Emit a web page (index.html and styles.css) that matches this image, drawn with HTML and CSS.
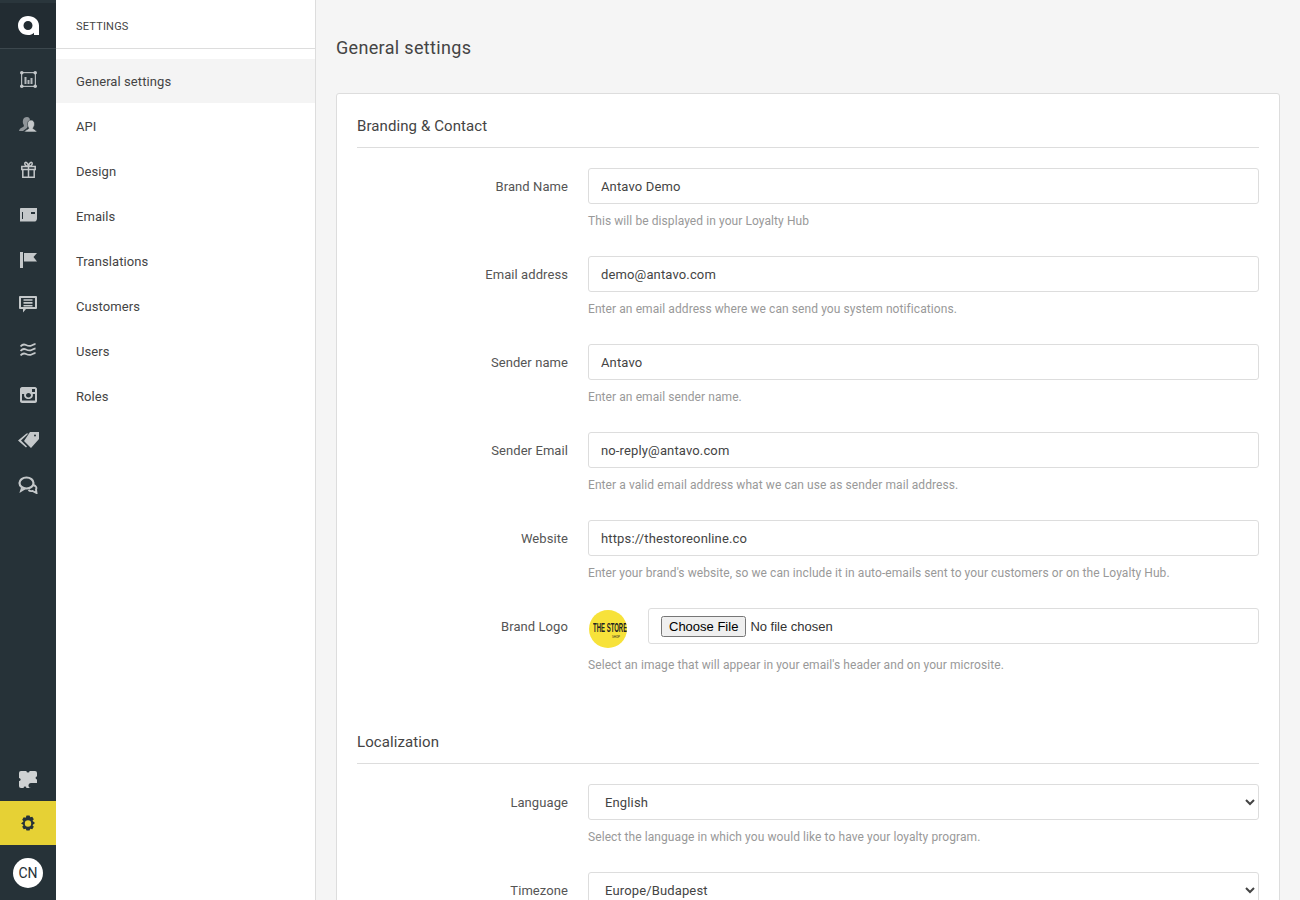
FILE: index.html
```html
<!DOCTYPE html>
<html lang="en">
<head>
<meta charset="utf-8">
<title>General settings</title>
<link rel="stylesheet" href="styles.css">
</head>
<body>
<div class="app">
  <nav class="rail">
    <div class="rail-logo">
      <svg width="21" height="19" viewBox="0 0 21 19"><path fill="#fff" fill-rule="evenodd" d="M10 0C4 0 0 4.200 0 9.500S4 19 10 19c2.500 0 4.500-.9 6-2.300V19h5V9.500C21 4 16 0 10 0zm0 5a4.500 4.500 0 110 9 4.500 4.500 0 010-9z"/></svg>
    </div>
    <div class="rail-top">
      <a class="rail-item"><svg width="17" height="17" viewBox="0 0 17 17" fill="none" stroke="#b4b9bc" stroke-width="1.200"><rect x="1.600" y="1.600" width="13.800" height="13.800"/><g fill="#c4c8ca" stroke="none"><circle cx="1.800" cy="1.800" r="1.800"/><circle cx="15.200" cy="1.800" r="1.800"/><circle cx="1.800" cy="15.200" r="1.800"/><circle cx="15.200" cy="15.200" r="1.800"/></g><path fill="#b4b9bc" stroke="none" d="M4.500 6h2v7h-2zM7.500 9h2v4h-2zM10.500 7h2v6h-2z"/></svg></a>
      <a class="rail-item"><svg width="20" height="18" viewBox="0 0 20 18" fill="#c4c8ca"><path fill="#8f9599" d="M9 1c2 0 3 1.500 3 3.500S11 9 10 10l-1 2-4 3H1c.2-2 2-3.200 4-4 .8-.4 1-1 .8-2C5 8 4.500 6 5 4c.4-2 2-3 4-3z"/><path stroke="#263238" stroke-width=".6" d="M13 4c2.200 0 3.500 1.700 3.500 4S15.400 11.200 15 12.300c.2 1 2.800 1.200 4 3.700H6.500c1-2.500 4-2.700 4.300-3.700C10.200 11.200 9.500 10 9.500 8c0-2.300 1.300-4 3.500-4z"/></svg></a>
      <a class="rail-item"><svg width="15" height="17" viewBox="0 0 15 17" fill="none" stroke="#c4c8ca" stroke-width="1.500"><path d="M.8 5.500h13.400v3H.8zM1.800 8.500v7.700h11.400V8.500M7.500 5.500v10.700M7.500 5.500C5.500 5.500 3.500 4.200 3.800 2.200 4.200.3 7 1.500 7.500 5.500c.5-4 3.300-5.200 3.700-3.300.3 2-1.700 3.300-3.700 3.300z"/></svg></a>
      <a class="rail-item"><svg width="17" height="14" viewBox="0 0 17 14" fill="#c4c8ca"><path fill-rule="evenodd" d="M1 0h16v10.500c0 1.500-1 3-2 3H0V1c0-.5.500-1 1-1zM11 4v2h4V4zM2 4v7h1V4z"/></svg></a>
      <a class="rail-item"><svg width="17" height="16" viewBox="0 0 17 16" fill="#c4c8ca"><path d="M0 0h3v16H0zM4 1h13l-3.500 4 3.500 4.500H4z"/></svg></a>
      <a class="rail-item"><svg width="18" height="17" viewBox="0 0 18 17" fill="#c4c8ca"><path fill-rule="evenodd" d="M1 0h16c.5 0 1 .5 1 1v11c0 .5-.5 1-1 1H7l-3 3.500V13H1c-.5 0-1-.5-1-1V1c0-.5.500-1 1-1zm3.500 3.200v1.600h9V3.200zm0 2.900v1.600h9V6.100zm0 2.900v1.600h9V9zM2 2v9h14V2z"/></svg></a>
      <a class="rail-item"><svg width="16" height="14" viewBox="0 0 16 14" fill="none" stroke="#c4c8ca" stroke-width="1.800"><path d="M.5 3.500C2.500 1 4 1 6 2s3.500 1.500 5.500.5S14.500 1 15.500 1M.5 8C2.500 5.500 4 5.500 6 6.500s3.500 1.500 5.500.5 3-1.500 4-1.500M.5 12.500C2.500 10 4 10 6 11s3.500 1.500 5.500.5 3-1.500 4-1.500"/></svg></a>
      <a class="rail-item"><svg width="17" height="16" viewBox="0 0 17 16" fill="#c4c8ca"><path fill-rule="evenodd" d="M2 0h13c1 0 2 1 2 2v12c0 1-1 2-2 2H2c-1 0-2-1-2-2V2C0 1 1 0 2 0zm10 2v3h3V2zM2 7v6.500h13V7h-2.200c.7 3-1.600 5-4.300 5S3.500 10 4.200 7zm6.500-1C7 6 6 7 6 8.300s1 2.200 2.500 2.200S11 9.500 11 8.300 10 6 8.500 6z"/></svg></a>
      <a class="rail-item"><svg width="21" height="16" viewBox="0 0 21 16" fill="#c4c8ca"><path fill-rule="evenodd" d="M12 0h9v7l-8 9-7-7zm5 2.500a1 1 0 100 2 1 1 0 000-2z"/><path d="M8.500 1.500h2L3 8.500l6 6-1 1L0 8.500z"/></svg></a>
      <a class="rail-item"><svg width="20" height="18" viewBox="0 0 20 18" fill="none" stroke="#c4c8ca" stroke-width="2.200"><ellipse cx="8.500" cy="7" rx="7" ry="5.500"/><path stroke-width="1.900" d="M4 11.500 3 15l4-2.500M15.500 9c2.500 1 3.500 2.500 2.500 4.500l.5 3.500-4-2c-1.500.3-3 0-4-1"/></svg></a>
    </div>
    <div class="rail-bottom">
      <a class="rail-item rail-puzzle"><svg width="18" height="17" viewBox="0 0 18 17"><rect width="18" height="17" rx="2" fill="#cfd2d3"/><g fill="#263238"><circle cx="9" cy="0" r="1.600"/><circle cx="0" cy="8.500" r="1.600"/><circle cx="18" cy="7" r="1.400"/><circle cx="6" cy="17" r="1.400"/><rect x="12" y="12" width="6" height="5"/><circle cx="12" cy="14.500" r="2.500"/></g></svg></a>
      <a class="rail-active"><svg width="16" height="17" viewBox="0 0 16 17"><path fill="#263238" fill-rule="evenodd" d="M6.500.5h3l.8 1.800 2-.5 1.500 2.500-1.300 1.500 1 1 1.500 1.200-1.500 1.200-1 1 1.300 1.500-1.500 2.500-2-.5-.8 1.800h-3l-.8-1.800-2 .5-1.500-2.500 1.300-1.500-1-1L1 8.500 2.500 7.300l1-1-1.300-1.500 1.500-2.500 2 .5zM8 5.300a3.200 3.200 0 100 6.400 3.200 3.200 0 000-6.400z"/></svg></a>
      <div class="rail-user"><span class="avatar">CN</span></div>
    </div>
  </nav>

  <aside class="side">
    <div class="side-head">SETTINGS</div>
    <ul class="side-list">
      <li class="side-item is-active">General settings</li>
      <li class="side-item">API</li>
      <li class="side-item">Design</li>
      <li class="side-item">Emails</li>
      <li class="side-item">Translations</li>
      <li class="side-item">Customers</li>
      <li class="side-item">Users</li>
      <li class="side-item">Roles</li>
    </ul>
  </aside>

  <main class="main">
    <h1 class="page-title">General settings</h1>
    <section class="card">
      <h2 class="card-title">Branding &amp; Contact</h2>
      <div class="row">
        <label class="row-label">Brand Name</label>
        <div class="row-body"><input class="field" type="text" value="Antavo Demo"><p class="help">This will be displayed in your Loyalty Hub</p></div>
      </div>
      <div class="row">
        <label class="row-label">Email address</label>
        <div class="row-body"><input class="field" type="text" value="demo@antavo.com"><p class="help">Enter an email address where we can send you system notifications.</p></div>
      </div>
      <div class="row">
        <label class="row-label">Sender name</label>
        <div class="row-body"><input class="field" type="text" value="Antavo"><p class="help">Enter an email sender name.</p></div>
      </div>
      <div class="row">
        <label class="row-label">Sender Email</label>
        <div class="row-body"><input class="field" type="text" value="no-reply@antavo.com"><p class="help">Enter a valid email address what we can use as sender mail address.</p></div>
      </div>
      <div class="row">
        <label class="row-label">Website</label>
        <div class="row-body"><input class="field" type="text" value="https://thestoreonline.co"><p class="help">Enter your brand's website, so we can include it in auto-emails sent to your customers or on the Loyalty Hub.</p></div>
      </div>
      <div class="row">
        <label class="row-label">Brand Logo</label>
        <div class="row-body">
          <div class="logo-line">
            <span class="brand-logo"><span class="brand-text">THE STORE</span><span class="brand-sub">SHOP</span></span>
            <div class="file-box"><input class="file" type="file"></div>
          </div>
          <p class="help help-logo">Select an image that will appear in your email's header and on your microsite.</p>
        </div>
      </div>

      <h2 class="card-title card-title-next">Localization</h2>
      <div class="row">
        <label class="row-label">Language</label>
        <div class="row-body"><select class="field"><option>English</option></select><p class="help">Select the language in which you would like to have your loyalty program.</p></div>
      </div>
      <div class="row">
        <label class="row-label">Timezone</label>
        <div class="row-body"><select class="field"><option>Europe/Budapest</option></select></div>
      </div>
    </section>
  </main>
</div>
</body>
</html>
```
FILE: styles.css
```css
* { box-sizing: border-box; }
html, body { margin: 0; height: 100%; overflow: hidden; }
body { font-family: Roboto, "Liberation Sans", sans-serif; font-size: 13px; color: #333; letter-spacing: .08px; }
.app { display: flex; height: 900px; overflow: hidden; }

.rail { width: 56px; flex: none; background: #263238; display: flex; flex-direction: column; }
.rail-logo { height: 49px; flex: none; display: flex; align-items: center; justify-content: center; border-top: 3px solid #2a363c; border-bottom: 1px solid #3c474d; background: #222c32; }
.rail-top { padding-top: 8px; display: flex; flex-direction: column; }
.rail-item { height: 45px; display: flex; align-items: center; justify-content: center; }
.rail-bottom { margin-top: auto; display: flex; flex-direction: column; }
.rail-puzzle { height: 44px; }
.rail-active { height: 44px; background: #e6d135; display: flex; align-items: center; justify-content: center; }
.rail-user { height: 55px; display: flex; align-items: center; justify-content: center; }
.avatar { width: 30px; height: 30px; border-radius: 50%; background: #fff; color: #263238; font-size: 14px; letter-spacing: 0; display: flex; align-items: center; justify-content: center; }

.side { width: 260px; flex: none; background: #fff; border-right: 1px solid #ddd; }
.side-head { height: 49px; border-bottom: 1px solid #ddd; padding: 4px 20px 0; display: flex; align-items: center; font-size: 11px; color: #444; letter-spacing: .2px; }
.side-list { list-style: none; margin: 10px 0 0; padding: 0; }
.side-item { height: 45px; padding: 0 20px; display: flex; align-items: center; color: #444; }
.side-item.is-active { height: 44px; margin-bottom: 1px; background: #f4f4f4; }

.main { flex: 1; min-width: 0; background: #f5f5f5; padding: 0 20px; }
.page-title { margin: 0; height: 93px; padding-top: 37px; font-size: 18px; line-height: 22px; font-weight: 400; color: #444; letter-spacing: .33px; }
.card { background: #fff; border: 1px solid #ddd; border-radius: 3px; padding: 20px 20px 0; }
.card-title { margin: 0 0 20px; height: 34px; border-bottom: 1px solid #ddd; font-size: 15px; line-height: 24px; font-weight: 400; color: #444; letter-spacing: .09px; }
.card-title-next { margin-top: 34px; }
.row { display: flex; height: 88px; }
.row-label { width: 211px; flex: none; padding-top: 11px; line-height: 16px; text-align: right; color: #555; }
.row-body { margin-left: 20px; flex: 1; min-width: 0; }
.field { display: block; width: 100%; height: 36px; border: 1px solid #ddd; border-radius: 3px; background: #fff; padding: 0 12px; font: inherit; letter-spacing: .14px; color: #444; }
.help { margin: 9px 0 0; font-size: 12px; line-height: 16px; color: #999; }
.help-logo { margin-top: 13px; }
.logo-line { display: flex; align-items: flex-start; height: 36px; }
.brand-logo { width: 38px; height: 38px; flex: none; margin: 2px 21px 0 1px; border-radius: 50%; background: #f7e23a; display: flex; flex-direction: column; align-items: center; justify-content: center; overflow: hidden; color: #222; }
.brand-text { font-family: "Liberation Sans", sans-serif; font-size: 13px; line-height: 15px; font-weight: 700; letter-spacing: 0; white-space: nowrap; transform: scaleX(.46); margin-left: 5px; }
.brand-sub { font-size: 3px; line-height: 4px; letter-spacing: 0; margin-left: 16px; }
.file-box { flex: 1; height: 36px; border: 1px solid #ddd; border-radius: 3px; display: flex; align-items: center; padding-left: 12px; }
.file { font-family: Arial, "Liberation Sans", sans-serif; font-size: 13px; letter-spacing: 0; color: #333; }
```
